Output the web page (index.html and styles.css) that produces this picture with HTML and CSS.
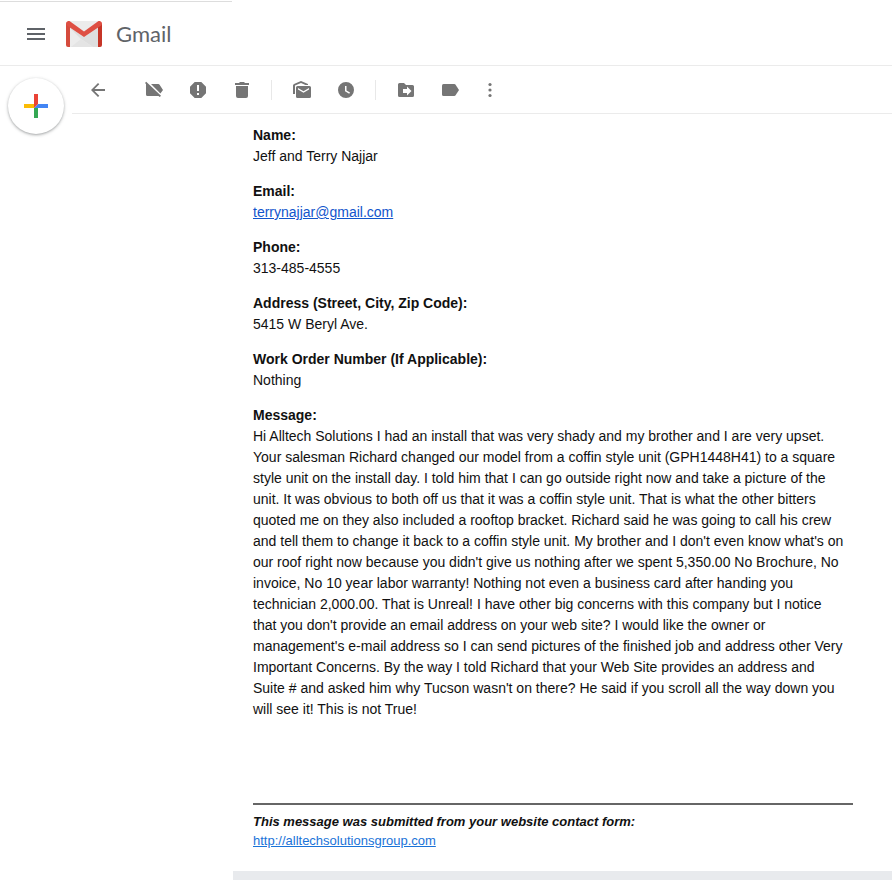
FILE: index.html
```html
<!DOCTYPE html>
<html lang="en">
<head>
    <meta charset="UTF-8">
    <title>Gmail</title>
    <link rel="stylesheet" href="styles.css">
</head>
<body>
    <header class="top-bar">
        <button class="menu-btn" aria-label="Main menu">
            <svg width="18" height="12" viewBox="0 0 18 12"><path d="M0 0h18v2H0zM0 5h18v2H0zM0 10h18v2H0z"/></svg>
        </button>
        <a class="logo" href="#">
            <svg width="36" height="26" viewBox="0 0 36 26" aria-hidden="true">
                <path fill="#ececec" d="M2 0h32v26H2z"/>
                <path fill="#dedede" d="M4 7l14 9 14-9v19h-5L15 18z"/>
                <path fill="#e4e4e4" d="M5 26l10-8 12 8z"/>
                <path fill="#d54b3d" d="M0 2.500V24a2 2 0 0 0 2 2h2V5z"/>
                <path fill="#c63527" d="M36 2.500V24a2 2 0 0 1-2 2h-2V5z"/>
                <path fill="#de4f43" d="M0 2.500C0 .5 2 0 3.500 0L18 10.500 32.500 0C34 0 36 .5 36 2.500c0 1-.5 1.800-1.200 2.300L18 16 1.200 4.800C.5 4.300 0 3.500 0 2.500z"/>
            </svg>
            <span class="logo-text">Gmail</span>
        </a>
    </header>

    <div class="page">
        <aside class="sidebar">
            <button class="compose" aria-label="Compose">
                <svg width="24" height="24" viewBox="0 0 24 24">
                    <path fill="#fbbc05" d="M0 10h10v4H0z"/>
                    <path fill="#4285f4" d="M10 14l4-4h10v4z"/>
                    <path fill="#34a853" d="M10 14h4v10h-4z"/>
                    <path fill="#ea4335" d="M10 0h4v10l-4 4z"/>
                </svg>
            </button>
        </aside>

        <main>
            <div class="toolbar">
                <button class="tool back" aria-label="Back">
                    <svg viewBox="0 0 20 20"><path d="M17 9H6.500l4.800-4.800L10 3l-7 7 7 7 1.300-1.200L6.500 11H17z"/></svg>
                </button>
                <button class="tool" aria-label="Remove label">
                    <svg viewBox="0 0 20 20"><path d="M1 3l1.200-1.200L17 15.800 15.800 17l-1.300-1H3.500Q2 16 2 14.500V4zM7 4h7.300q.8 0 1.300.7L19 10l-2.600 3.600z"/></svg>
                </button>
                <button class="tool" aria-label="Report spam">
                    <svg viewBox="0 0 20 20"><path fill-rule="evenodd" d="M6.700 2h6.600L18 6.700v6.600L13.300 18H6.700L2 13.300V6.700zM9 5v6h2V5zM9 13v2h2v-2z"/></svg>
                </button>
                <button class="tool" aria-label="Delete">
                    <svg viewBox="0 0 20 20"><path d="M3 3h4l1-1h4l1 1h4v2H3zM4 6h12v10q0 2-2 2H6q-2 0-2-2z"/></svg>
                </button>
                <span class="divider"></span>
                <button class="tool" aria-label="Mark as unread">
                    <svg viewBox="0 0 20 20"><path fill-rule="evenodd" d="M1 14V5.500Q1 4.500 2 4l7-3 7 3v1h-2.500L9 3 3 5.500V14zM5.500 6h12Q19 6 19 7.500v9q0 1.500-1.500 1.500h-12Q4 18 4 16.500v-9Q4 6 5.500 6zM6 8v1.500l5.500 3.200L17 9.500V8l-5.500 3.200z"/></svg>
                </button>
                <button class="tool" aria-label="Snooze">
                    <svg viewBox="0 0 20 20"><path fill-rule="evenodd" d="M10 2a8 8 0 1 0 0 16 8 8 0 0 0 0-16zM9 6h1.500v4.500l3.500 2-.8 1.300L9 11.300z"/></svg>
                </button>
                <span class="divider"></span>
                <button class="tool" aria-label="Move to">
                    <svg viewBox="0 0 20 20"><path fill-rule="evenodd" d="M3.500 3H8l2 2h6.500Q18 5 18 6.500v9q0 1.500-1.500 1.500h-13Q2 17 2 15.500v-11Q2 3 3.500 3zM7 9v4h4v2.500l4.500-4.500L11 6.500V9z"/></svg>
                </button>
                <button class="tool" aria-label="Labels">
                    <svg viewBox="0 0 20 20"><path d="M3.500 4h10.800q.8 0 1.300.7L19 10l-3.400 5.300q-.5.700-1.300.7H3.500Q2 16 2 14.500v-9Q2 4 3.500 4z"/></svg>
                </button>
                <button class="tool more" aria-label="More">
                    <svg viewBox="0 0 20 20"><circle cx="10" cy="4.500" r="1.600"/><circle cx="10" cy="10" r="1.600"/><circle cx="10" cy="15.500" r="1.600"/></svg>
                </button>
            </div>

            <article class="mail">
                <dl class="fields">
                    <dt>Name:</dt>
                    <dd>Jeff and Terry Najjar</dd>
                    <dt>Email:</dt>
                    <dd><a href="mailto:terrynajjar@gmail.com">terrynajjar@gmail.com</a></dd>
                    <dt>Phone:</dt>
                    <dd>313-485-4555</dd>
                    <dt>Address (Street, City, Zip Code):</dt>
                    <dd>5415 W Beryl Ave.</dd>
                    <dt>Work Order Number (If Applicable):</dt>
                    <dd>Nothing</dd>
                    <dt>Message:</dt>
                    <dd>Hi Alltech Solutions I had an install that was very shady and my brother and I are very upset. Your salesman Richard changed our model from a coffin style unit (GPH1448H41) to a square style unit on the install day. I told him that I can go outside right now and take a picture of the unit. It was obvious to both off us that it was a coffin style unit. That is what the other bitters quoted me on they also included a rooftop bracket. Richard said he was going to call his crew and tell them to change it back to a coffin style unit. My brother and I don't even know what's on our roof right now because you didn't give us nothing after we spent 5,350.00 No Brochure, No invoice, No 10 year labor warranty! Nothing not even a business card after handing you technician 2,000.00. That is Unreal! I have other big concerns with this company but I notice that you don't provide an email address on your web site? I would like the owner or management's e-mail address so I can send pictures of the finished job and address other Very Important Concerns. By the way I told Richard that your Web Site provides an address and Suite # and asked him why Tucson wasn't on there? He said if you scroll all the way down you will see it! This is not True!</dd>
                </dl>
                <footer class="source">
                    <p>This message was submitted from your website contact form:</p>
                    <a href="http://alltechsolutionsgroup.com">http://alltechsolutionsgroup.com</a>
                </footer>
            </article>
            <div class="mail-end"></div>
        </main>
    </div>
</body>
</html>
```
FILE: styles.css
```css
* {
    box-sizing: border-box;
}

body {
    margin: 0;
    background: #fff;
    color: #111;
    font-family: "Liberation Sans", Arial, sans-serif;
    font-size: 14px;
    line-height: 21px;
}

button {
    padding: 0;
    border: 0;
    background: none;
    cursor: pointer;
}

svg {
    display: block;
}

/* top bar */
.top-bar {
    position: relative;
    display: flex;
    align-items: center;
    height: 66px;
    padding: 2px 12px 0;
    border-bottom: 1px solid #ebebeb;
}

.top-bar::before {
    content: "";
    position: absolute;
    top: 1px;
    left: 0;
    width: 232px;
    height: 1px;
    background: #ddd;
}

.menu-btn {
    display: flex;
    align-items: center;
    justify-content: center;
    width: 48px;
    height: 48px;
    fill: #5f6368;
}

.logo {
    display: flex;
    align-items: center;
    gap: 14px;
    margin-left: 6px;
    text-decoration: none;
}

.logo-text {
    color: #5f6368;
    font-family: Lato, sans-serif;
    font-size: 22px;
    line-height: 26px;
}

.page {
    display: flex;
}

.sidebar {
    flex: 0 0 72px;
    padding: 12px 8px;
}

.compose {
    display: flex;
    align-items: center;
    justify-content: center;
    width: 56px;
    height: 56px;
    border-radius: 50%;
    background: #fff;
    box-shadow: 0 1px 2px rgba(60, 64, 67, .3), 0 1px 3px 1px rgba(60, 64, 67, .15);
}

main {
    flex: 1;
    min-width: 0;
}

/* toolbar */
.toolbar {
    display: flex;
    align-items: center;
    height: 48px;
    padding-left: 4px;
    border-bottom: 1px solid #ebebeb;
}

.tool {
    display: flex;
    align-items: center;
    justify-content: center;
    width: 44px;
    height: 40px;
    fill: #757575;
}

.tool svg {
    width: 20px;
    height: 20px;
}

.back {
    margin-right: 12px;
}

.more {
    width: 36px;
}

.divider {
    width: 1px;
    height: 20px;
    margin: 0 8px 0 7px;
    background: #e8e8e8;
}

/* message */
.mail {
    max-width: 781px;
    padding: 11px 0 21px 181px;
}

.fields {
    margin: 0;
}

.fields dt {
    font-weight: bold;
}

.fields dd {
    margin: 0 0 14px;
    padding-right: 6px;
}

a {
    color: #15c;
}

.source {
    margin-top: 83px;
    padding-top: 7px;
    border-top: 2px solid #666;
    font-size: 13px;
    line-height: 19px;
}

.source p {
    margin: 0;
    font-weight: bold;
    font-style: italic;
}

.source a {
    color: #1a73d8;
}

.mail-end {
    height: 9px;
    margin-left: 161px;
    background: #e8eaed;
}
```
